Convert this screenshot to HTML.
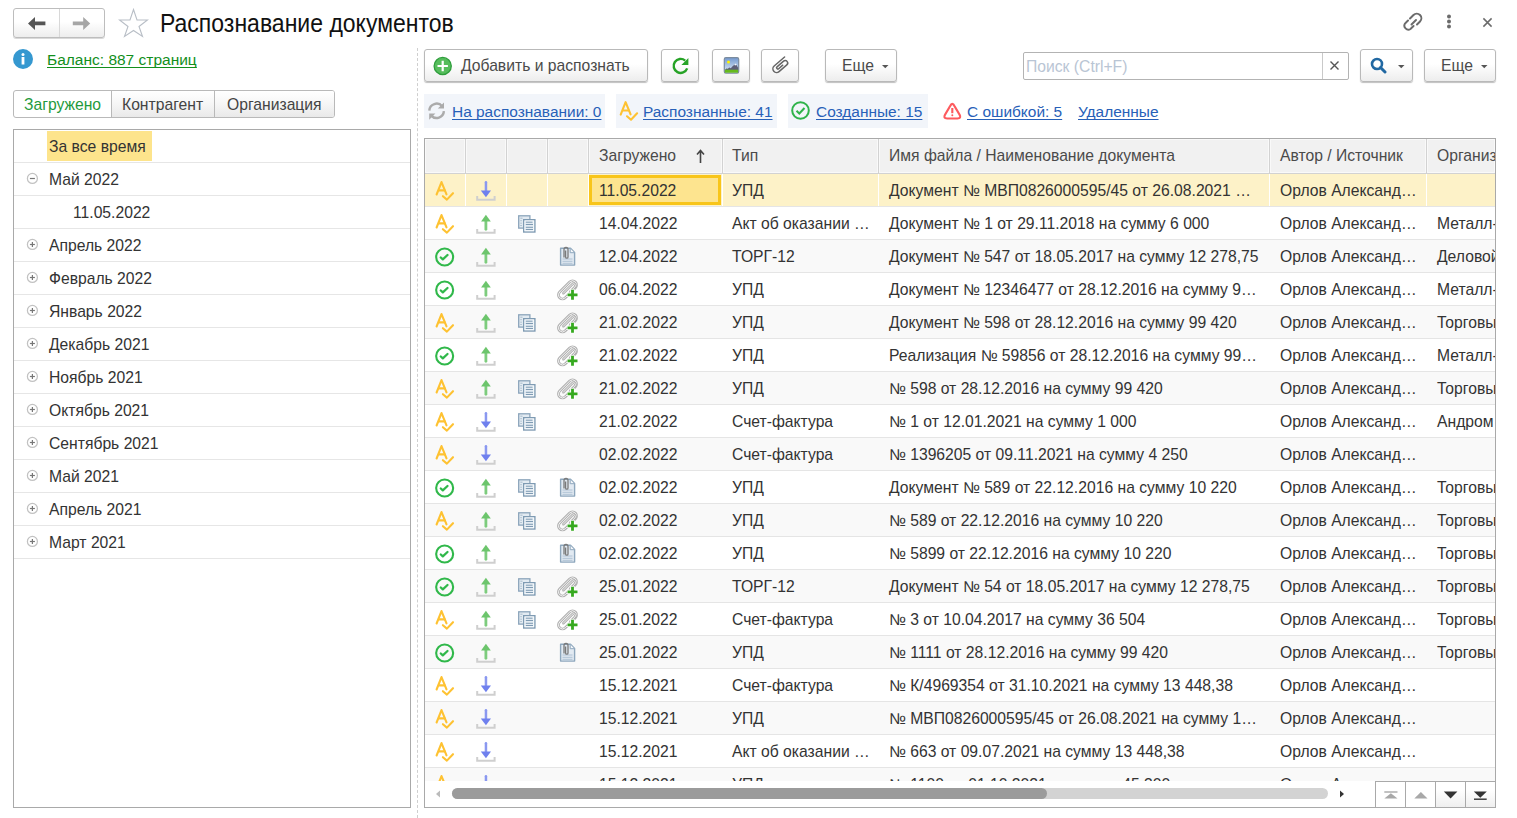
<!DOCTYPE html><html><head><meta charset="utf-8"><style>
*{box-sizing:border-box;margin:0;padding:0}
html,body{width:1517px;height:818px;overflow:hidden;background:#fff;font-family:"Liberation Sans",sans-serif;font-size:15.7px;color:#333}
.a{position:absolute}
.btn{position:absolute;border:1px solid #b9b9b9;border-radius:3px;background:linear-gradient(#fff 0%,#fff 45%,#ededed 100%);box-shadow:0 1px 1px rgba(0,0,0,.25)}
.lnk{text-decoration:underline;text-decoration-skip-ink:none;text-underline-offset:2px;white-space:nowrap}
.tx{position:absolute;white-space:nowrap;line-height:18px;margin-top:1px}
.chip{position:absolute;background:#f2f5fa;height:34px;top:94px}
.tree-row{position:absolute;left:1px;right:1px;height:33px;border-bottom:1px solid #e6e6e6}
.grid{position:absolute;left:424px;top:138px;width:1072px;height:670px;border:1px solid #a9a9a9;overflow:hidden;background:#fff}
.hdr{position:absolute;left:0;top:0;height:35px;width:1070px;background:#f2f2f2;border-bottom:1px solid #d5d5d5}
.hsep{position:absolute;top:0;height:34px;width:2px;border-left:1px solid #dcdcdc;border-right:1px solid #fff}
.row{position:absolute;left:0;width:1070px;height:33px;border-bottom:1px solid #e4e4e4}
.cell{position:absolute;top:0;height:32px;line-height:32px;white-space:nowrap;overflow:hidden;color:#333}
</style></head><body><div class="btn" style="left:13px;top:8px;width:92px;height:30px;box-shadow:0 1px 0 rgba(0,0,0,.15);border-color:#bdbdbd"></div><div class="a" style="left:59px;top:9px;width:1px;height:28px;background:#d8d8d8"></div><svg class="a" style="left:20px;top:10px" width="80" height="26" viewBox="20 10 80 26"><path d="M28 23.45 L35 16.9 V21.6 H45.4 V25.3 H35 V30 Z" fill="#555"/><path d="M90.2 23.45 L83.2 16.9 V21.6 H72.8 V25.3 H83.2 V30 Z" fill="#a6a6a6"/></svg><svg class="a" style="left:118px;top:8px" width="31" height="30" viewBox="0 0 31 30"><path d="M15.5 1.5 L19 12 L29.5 12 L21 18.5 L24.5 28.5 L15.5 22.5 L6.5 28.5 L10 18.5 L1.5 12 L12 12 Z" fill="none" stroke="#b8bec6" stroke-width="1.1" stroke-linejoin="miter"/></svg><div class="tx" style="left:160px;top:6px;font-size:23px;line-height:28px;color:#111;transform:scaleY(1.14);transform-origin:0 0">Распознавание документов</div><svg class="a" style="left:1403px;top:11px" width="24" height="22" viewBox="0 0 24 22"><g fill="none" stroke="#6b6b6b" stroke-width="2" stroke-linecap="round"><path d="M7 7.5 L10.5 4 A4 4 0 0 1 17 10.5 L14 13.5"/><path d="M10.5 15 L7.5 18 A4 4 0 0 1 2 12.5 L5 9.5"/><path d="M8.5 13.5 L13 9"/></g></svg><svg class="a" style="left:1445px;top:13px" width="8" height="18" viewBox="0 0 8 18"><g fill="#6b6b6b"><circle cx="4" cy="3.5" r="2"/><circle cx="4" cy="8.5" r="2"/><circle cx="4" cy="13.5" r="2"/></g></svg><svg class="a" style="left:1481px;top:16px" width="13" height="13" viewBox="0 0 13 13"><g stroke="#6b6b6b" stroke-width="1.5"><path d="M2.4 2.4 L10.6 10.6 M10.6 2.4 L2.4 10.6"/></g></svg><svg class="a" style="left:13px;top:49px" width="20" height="20" viewBox="0 0 20 20"><circle cx="10" cy="10" r="10" fill="#3598d0"/><rect x="8.6" y="8" width="2.8" height="7.5" fill="#fff"/><circle cx="10" cy="5.4" r="1.5" fill="#fff"/></svg><div class="tx lnk" style="left:47px;top:50px;color:#128f1c;font-size:15.5px">Баланс: 887 страниц</div><div class="a" style="left:13px;top:90px;width:322px;height:28px;border:1px solid #b9b9b9;border-radius:3px;background:#fff;overflow:hidden"><div class="a" style="left:98px;top:0;width:222px;height:26px;background:linear-gradient(#fff 0%,#f6f6f6 50%,#e9e9e9 100%)"></div><div class="a" style="left:97px;top:0;width:1px;height:26px;background:#b9b9b9"></div><div class="a" style="left:200px;top:0;width:1px;height:26px;background:#b9b9b9"></div><div class="tx" style="left:10px;top:4px;color:#1f9a3c">Загружено</div><div class="tx" style="left:108px;top:4px;color:#444">Контрагент</div><div class="tx" style="left:213px;top:4px;color:#444">Организация</div></div><div class="a" style="left:13px;top:129px;width:398px;height:679px;border:1px solid #a9a9a9;background:#fff"><div class="tree-row" style="top:0px;left:0;right:0"><div class="a" style="left:33px;top:1px;width:105px;height:30px;background:#fde48c"></div><div class="tx" style="left:35px;top:7px;color:#333">За все время</div></div><div class="tree-row" style="top:33px;left:0;right:0"><svg class="a" style="left:12px;top:9px" width="14" height="14" viewBox="0 0 14 14"><circle cx="6.4" cy="6.4" r="5" fill="none" stroke="#c2c2c2" stroke-width="1.25"/><g fill="none" stroke="#777" stroke-width="1.2"><path d="M3.9 6.5 H8.9"/></g></svg><div class="tx" style="left:35px;top:7px;color:#333">Май 2022</div></div><div class="tree-row" style="top:66px;left:0;right:0"><div class="tx" style="left:59px;top:7px;color:#333">11.05.2022</div></div><div class="tree-row" style="top:99px;left:0;right:0"><svg class="a" style="left:12px;top:9px" width="14" height="14" viewBox="0 0 14 14"><circle cx="6.4" cy="6.4" r="5" fill="none" stroke="#c2c2c2" stroke-width="1.25"/><g fill="none" stroke="#777" stroke-width="1.2"><path d="M3.9 6.5 H8.9"/><path d="M6.4 4 V9"/></g></svg><div class="tx" style="left:35px;top:7px;color:#333">Апрель 2022</div></div><div class="tree-row" style="top:132px;left:0;right:0"><svg class="a" style="left:12px;top:9px" width="14" height="14" viewBox="0 0 14 14"><circle cx="6.4" cy="6.4" r="5" fill="none" stroke="#c2c2c2" stroke-width="1.25"/><g fill="none" stroke="#777" stroke-width="1.2"><path d="M3.9 6.5 H8.9"/><path d="M6.4 4 V9"/></g></svg><div class="tx" style="left:35px;top:7px;color:#333">Февраль 2022</div></div><div class="tree-row" style="top:165px;left:0;right:0"><svg class="a" style="left:12px;top:9px" width="14" height="14" viewBox="0 0 14 14"><circle cx="6.4" cy="6.4" r="5" fill="none" stroke="#c2c2c2" stroke-width="1.25"/><g fill="none" stroke="#777" stroke-width="1.2"><path d="M3.9 6.5 H8.9"/><path d="M6.4 4 V9"/></g></svg><div class="tx" style="left:35px;top:7px;color:#333">Январь 2022</div></div><div class="tree-row" style="top:198px;left:0;right:0"><svg class="a" style="left:12px;top:9px" width="14" height="14" viewBox="0 0 14 14"><circle cx="6.4" cy="6.4" r="5" fill="none" stroke="#c2c2c2" stroke-width="1.25"/><g fill="none" stroke="#777" stroke-width="1.2"><path d="M3.9 6.5 H8.9"/><path d="M6.4 4 V9"/></g></svg><div class="tx" style="left:35px;top:7px;color:#333">Декабрь 2021</div></div><div class="tree-row" style="top:231px;left:0;right:0"><svg class="a" style="left:12px;top:9px" width="14" height="14" viewBox="0 0 14 14"><circle cx="6.4" cy="6.4" r="5" fill="none" stroke="#c2c2c2" stroke-width="1.25"/><g fill="none" stroke="#777" stroke-width="1.2"><path d="M3.9 6.5 H8.9"/><path d="M6.4 4 V9"/></g></svg><div class="tx" style="left:35px;top:7px;color:#333">Ноябрь 2021</div></div><div class="tree-row" style="top:264px;left:0;right:0"><svg class="a" style="left:12px;top:9px" width="14" height="14" viewBox="0 0 14 14"><circle cx="6.4" cy="6.4" r="5" fill="none" stroke="#c2c2c2" stroke-width="1.25"/><g fill="none" stroke="#777" stroke-width="1.2"><path d="M3.9 6.5 H8.9"/><path d="M6.4 4 V9"/></g></svg><div class="tx" style="left:35px;top:7px;color:#333">Октябрь 2021</div></div><div class="tree-row" style="top:297px;left:0;right:0"><svg class="a" style="left:12px;top:9px" width="14" height="14" viewBox="0 0 14 14"><circle cx="6.4" cy="6.4" r="5" fill="none" stroke="#c2c2c2" stroke-width="1.25"/><g fill="none" stroke="#777" stroke-width="1.2"><path d="M3.9 6.5 H8.9"/><path d="M6.4 4 V9"/></g></svg><div class="tx" style="left:35px;top:7px;color:#333">Сентябрь 2021</div></div><div class="tree-row" style="top:330px;left:0;right:0"><svg class="a" style="left:12px;top:9px" width="14" height="14" viewBox="0 0 14 14"><circle cx="6.4" cy="6.4" r="5" fill="none" stroke="#c2c2c2" stroke-width="1.25"/><g fill="none" stroke="#777" stroke-width="1.2"><path d="M3.9 6.5 H8.9"/><path d="M6.4 4 V9"/></g></svg><div class="tx" style="left:35px;top:7px;color:#333">Май 2021</div></div><div class="tree-row" style="top:363px;left:0;right:0"><svg class="a" style="left:12px;top:9px" width="14" height="14" viewBox="0 0 14 14"><circle cx="6.4" cy="6.4" r="5" fill="none" stroke="#c2c2c2" stroke-width="1.25"/><g fill="none" stroke="#777" stroke-width="1.2"><path d="M3.9 6.5 H8.9"/><path d="M6.4 4 V9"/></g></svg><div class="tx" style="left:35px;top:7px;color:#333">Апрель 2021</div></div><div class="tree-row" style="top:396px;left:0;right:0"><svg class="a" style="left:12px;top:9px" width="14" height="14" viewBox="0 0 14 14"><circle cx="6.4" cy="6.4" r="5" fill="none" stroke="#c2c2c2" stroke-width="1.25"/><g fill="none" stroke="#777" stroke-width="1.2"><path d="M3.9 6.5 H8.9"/><path d="M6.4 4 V9"/></g></svg><div class="tx" style="left:35px;top:7px;color:#333">Март 2021</div></div></div><div class="a" style="left:417px;top:48px;width:1px;height:770px;border-left:1px dashed #cfcfcf"></div><div class="btn" style="left:424px;top:49px;width:224px;height:33px"></div><svg class="a" style="left:432px;top:56px" width="21" height="21" viewBox="432 56 21 21"><circle cx="442.7" cy="66" r="8.6" fill="#56bd5c" stroke="#2f9e3c" stroke-width="1.3"/><path d="M442.7 60.8 V71.2 M437.5 66 H447.9" stroke="#fff" stroke-width="2.2"/></svg><div class="tx" style="left:461px;top:56px;color:#4a4a4a">Добавить и распознать</div><div class="btn" style="left:661px;top:49px;width:38px;height:33px"></div><svg class="a" style="left:668px;top:53px" width="26" height="25" viewBox="668 53 26 25"><path d="M687.2 68.4 A7 7 0 1 1 685.2 60.6" fill="none" stroke="#27a327" stroke-width="2.4"/><path d="M688.4 58 L688.4 65 L681.4 65 Z" fill="#27a327"/></svg><div class="btn" style="left:712px;top:49px;width:38px;height:33px"></div><svg class="a" style="left:720px;top:54px" width="24" height="24" viewBox="720 54 24 24"><defs><linearGradient id="sky" x1="0" y1="0" x2="0" y2="1"><stop offset="0" stop-color="#7399cf"/><stop offset="1" stop-color="#e6f1fb"/></linearGradient></defs><rect x="724.3" y="57.7" width="14.4" height="15.4" rx="1.6" fill="url(#sky)" stroke="#7b8c9e" stroke-width="1.2"/><circle cx="728.5" cy="62" r="1.5" fill="#fff200"/><path d="M724.9 69.9 L726.3 68.4 L727.8 68.8 L729.3 67.6 L730.8 68.3 L732.6 66.3 L733.8 65.2 L735.5 64.3 L736.8 65.6 L738.1 67.8 V69.9 Z" fill="#5e5f77"/><path d="M734.3 64.9 L735.6 63.6 L736.6 64.6 L735.5 65.6 Z" fill="#f4f7fb"/><rect x="724.9" y="69.7" width="13.2" height="3" fill="#66ba1e"/></svg><div class="btn" style="left:761px;top:49px;width:38px;height:33px"></div><svg class="a" style="left:764px;top:51px" width="32" height="28" viewBox="764 51 32 28"><path transform="translate(776.6 68.8) rotate(-41)" d="M13.8 -3.7 L0 -3.7 A3.7 3.7 0 0 0 0 3.7 L10.3 3.7 A2.45 2.45 0 0 0 10.3 -1.2 L1.6 -1.2 A1.25 1.25 0 0 0 1.6 1.3 L7 1.3" fill="none" stroke="#666" stroke-width="1.5" stroke-linecap="round"/></svg><div class="btn" style="left:825px;top:49px;width:72px;height:33px"></div><div class="tx" style="left:842px;top:56px;color:#4a4a4a">Еще</div><svg class="a" style="left:882px;top:65px" width="7" height="4" viewBox="0 0 7 4"><path d="M0 0 H6.5 L3.25 3.3 Z" fill="#555"/></svg><div class="a" style="left:1023px;top:52px;width:326px;height:28px;border:1px solid #b3b3b3;border-radius:2px;background:#fff"></div><div class="a" style="left:1322px;top:53px;width:1px;height:26px;background:#c9c9c9"></div><div class="tx" style="left:1026px;top:57px;color:#b9c5d4">Поиск (Ctrl+F)</div><svg class="a" style="left:1329px;top:60px" width="11" height="11" viewBox="0 0 11 11"><path d="M1.5 1.5 L9.5 9.5 M9.5 1.5 L1.5 9.5" stroke="#555" stroke-width="1.4"/></svg><div class="btn" style="left:1360px;top:49px;width:53px;height:33px"></div><svg class="a" style="left:1370px;top:57px" width="17" height="17" viewBox="0 0 17 17"><circle cx="7" cy="7" r="5" fill="none" stroke="#2168a2" stroke-width="2.6"/><path d="M10.5 10.5 L15 15" stroke="#2168a2" stroke-width="3" stroke-linecap="round"/></svg><svg class="a" style="left:1398px;top:65px" width="7" height="4" viewBox="0 0 7 4"><path d="M0 0 H6.5 L3.25 3.3 Z" fill="#555"/></svg><div class="btn" style="left:1424px;top:49px;width:72px;height:33px"></div><div class="tx" style="left:1441px;top:56px;color:#4a4a4a">Еще</div><svg class="a" style="left:1481px;top:65px" width="7" height="4" viewBox="0 0 7 4"><path d="M0 0 H6.5 L3.25 3.3 Z" fill="#555"/></svg><div class="chip" style="left:424px;width:181px"></div><svg class="a" style="left:424px;top:98px" width="26" height="26" viewBox="424 98 26 26"><g fill="none" stroke="#ababab" stroke-width="2.4"><path d="M429.3 110.6 A7.3 7.3 0 0 1 442.2 106.3"/><path d="M443.9 111.2 A7.3 7.3 0 0 1 431.2 115.6"/></g><path d="M444 102.4 L444 108.6 L437.8 108.6 Z M429.2 113.5 L429.2 119.8 L435.4 113.5 Z" fill="#ababab"/></svg><div class="tx lnk" style="left:452px;top:102px;color:#2760b8;font-size:15.45px">На распознавании: 0</div><div class="chip" style="left:616px;width:161px"></div><svg class="a" style="left:615px;top:98px" width="26" height="26" viewBox="615 98 26 26"><g transform="translate(609.1 94.1)" fill="none" stroke="#fec232" stroke-width="2.1" stroke-linecap="round" stroke-linejoin="round"><path d="M11.6 20.5 L16.5 8.1 L21.5 20.3"/><path d="M14 16.4 H19.6"/><path d="M17.9 22.2 L21.9 25.6 L28 19.2"/></g></svg><div class="tx lnk" style="left:643px;top:102px;color:#2760b8;font-size:15.45px">Распознанные: 41</div><div class="chip" style="left:788px;width:140px"></div><svg class="a" style="left:791px;top:101px" width="19" height="19" viewBox="0 0 19 19"><circle cx="9.5" cy="9.5" r="8.3" fill="none" stroke="#2fb34a" stroke-width="2"/><path d="M5.5 9.8 L8.3 12.5 L13.5 7" fill="none" stroke="#2fb34a" stroke-width="2"/></svg><div class="tx lnk" style="left:816px;top:102px;color:#2760b8;font-size:15.45px">Созданные: 15</div><svg class="a" style="left:938px;top:98px" width="30" height="26" viewBox="938 98 30 26"><path d="M950 106.3 Q952.3 101.6 954.6 106.3 L959.6 114.8 Q961.6 118.5 957.5 118.5 L947.1 118.5 Q943 118.5 945 114.8 Z" fill="none" stroke="#fd5a5e" stroke-width="2.2" stroke-linejoin="round"/><path d="M952.3 108 V113.2" stroke="#fd5a5e" stroke-width="2.1"/><circle cx="952.3" cy="115.3" r="1" fill="#fd5a5e"/></svg><div class="tx lnk" style="left:967px;top:102px;color:#2760b8;font-size:15.45px">С ошибкой: 5</div><div class="tx lnk" style="left:1078px;top:102px;color:#2760b8;font-size:15.45px">Удаленные</div><div class="a" style="left:424px;top:138px;width:1072px;height:670px;border:1px solid #a9a9a9;background:#fff;overflow:hidden"><div class="a" style="left:0;top:0;width:1070px;height:35px;background:#d2d2d2"></div><div class="a" style="left:0px;top:0;width:40px;height:34px;background:#f1f1f1;border:1px solid #f9f9f9"></div><div class="a" style="left:41px;top:0;width:40px;height:34px;background:#f1f1f1;border:1px solid #f9f9f9"></div><div class="a" style="left:82px;top:0;width:40px;height:34px;background:#f1f1f1;border:1px solid #f9f9f9"></div><div class="a" style="left:123px;top:0;width:40px;height:34px;background:#f1f1f1;border:1px solid #f9f9f9"></div><div class="a" style="left:164px;top:0;width:133px;height:34px;background:#f1f1f1;border:1px solid #f9f9f9"></div><div class="a" style="left:298px;top:0;width:155px;height:34px;background:#f1f1f1;border:1px solid #f9f9f9"></div><div class="a" style="left:454px;top:0;width:390px;height:34px;background:#f1f1f1;border:1px solid #f9f9f9"></div><div class="a" style="left:845px;top:0;width:156px;height:34px;background:#f1f1f1;border:1px solid #f9f9f9"></div><div class="a" style="left:1002px;top:0;width:68px;height:34px;background:#f1f1f1;border:1px solid #f9f9f9"></div><div class="tx" style="left:174px;top:7px;color:#4a4a4a">Загружено</div><div class="tx" style="left:307px;top:7px;color:#4a4a4a">Тип</div><div class="tx" style="left:464px;top:7px;color:#4a4a4a">Имя файла / Наименование документа</div><div class="tx" style="left:855px;top:7px;color:#4a4a4a">Автор / Источник</div><div class="tx" style="left:1012px;top:7px;color:#4a4a4a">Организация</div><svg class="a" style="left:271px;top:10px" width="9" height="15" viewBox="0 0 9 15"><path d="M4.5 14 V2 M1 5.5 L4.5 1.5 L8 5.5" fill="none" stroke="#444" stroke-width="1.6"/></svg><div class="a" style="left:0;top:35px;width:1070px;height:607px;overflow:hidden"><div class="a" style="left:0;top:0px;width:1070px;height:33px;background:#fdf2c8;border-bottom:1px solid #e5e5e5"><div class="a" style="left:40px;top:0;width:1px;height:32px;background:#fff"></div><div class="a" style="left:81px;top:0;width:1px;height:32px;background:#fff"></div><div class="a" style="left:122px;top:0;width:1px;height:32px;background:#fff"></div><div class="a" style="left:163px;top:0;width:1px;height:32px;background:#fff"></div><div class="a" style="left:297px;top:0;width:1px;height:32px;background:#fff"></div><div class="a" style="left:453px;top:0;width:1px;height:32px;background:#fff"></div><div class="a" style="left:844px;top:0;width:1px;height:32px;background:#fff"></div><div class="a" style="left:1001px;top:0;width:1px;height:32px;background:#fff"></div><div class="a" style="left:164px;top:1px;width:132px;height:30px;background:#fde48f;border:3px solid #f8c51a"></div><svg class="a" style="left:8px;top:5px" width="24" height="24" viewBox="8 5 24 24"><g fill="none" stroke="#fec232" stroke-width="2.1" stroke-linecap="round" stroke-linejoin="round"><path d="M11.6 20.5 L16.5 8.1 L21.5 20.3"/><path d="M14 16.4 H19.6"/><path d="M17.9 22.2 L21.9 25.6 L28 19.2"/></g></svg><svg class="a" style="left:48px;top:4px" width="26" height="26" viewBox="48 4 26 26"><path d="M52.2 21.9 V25.8 H69.6 V21.9" fill="none" stroke="#cfcfcf" stroke-width="2"/><path d="M60.95 8.2 V17" stroke="#8a98f0" stroke-width="2.5" stroke-linecap="round"/><path d="M55.8 16.6 L66 16.6 L60.95 23.2 Z" fill="#6f80ee"/></svg><div class="tx" style="left:174px;top:7px;color:#333">11.05.2022</div><div class="tx" style="left:307px;top:7px;color:#333">УПД</div><div class="tx" style="left:464px;top:7px;color:#333">Документ № МВП0826000595/45 от 26.08.2021 …</div><div class="tx" style="left:855px;top:7px;color:#333">Орлов Александ…</div></div><div class="a" style="left:0;top:33px;width:1070px;height:33px;background:#fff;border-bottom:1px solid #e5e5e5"><svg class="a" style="left:8px;top:5px" width="24" height="24" viewBox="8 5 24 24"><g fill="none" stroke="#fec232" stroke-width="2.1" stroke-linecap="round" stroke-linejoin="round"><path d="M11.6 20.5 L16.5 8.1 L21.5 20.3"/><path d="M14 16.4 H19.6"/><path d="M17.9 22.2 L21.9 25.6 L28 19.2"/></g></svg><svg class="a" style="left:48px;top:4px" width="26" height="26" viewBox="48 4 26 26"><path d="M52.2 21.9 V25.8 H69.6 V21.9" fill="none" stroke="#cfcfcf" stroke-width="2"/><path d="M60.9 14 V22.3" stroke="#7dcc7d" stroke-width="2.8" stroke-linecap="round"/><path d="M56.1 14.4 L60.9 7.8 L65.8 14.4 Z" fill="#6cc56c"/></svg><svg class="a" style="left:90px;top:6px" width="24" height="22" viewBox="90 6 24 22"><rect x="93.7" y="8.8" width="11.2" height="12.3" fill="#e3ebf2" stroke="#8aa4bb" stroke-width="1.3"/><path d="M95.3 11.2 H97.5 M95.3 13.7 H96.8 M95.3 16.2 H96.8 M95.3 18.5 H96.8" stroke="#9fb4c6" stroke-width="0.9"/><rect x="98.7" y="12.7" width="11.2" height="12.3" fill="#e3ebf2" stroke="#7f9bb3" stroke-width="1.4"/><rect x="99.9" y="13.9" width="8.8" height="9.9" fill="none" stroke="#fafcfd" stroke-width="0.8"/><path d="M100.8 15.2 H107.5 M100.8 17.5 H108 M100.8 20.3 H108 M100.8 22.5 H108" stroke="#7f9bb3" stroke-width="1"/></svg><div class="tx" style="left:174px;top:7px;color:#333">14.04.2022</div><div class="tx" style="left:307px;top:7px;color:#333">Акт об оказании …</div><div class="tx" style="left:464px;top:7px;color:#333">Документ № 1 от 29.11.2018 на сумму 6 000</div><div class="tx" style="left:855px;top:7px;color:#333">Орлов Александ…</div><div class="tx" style="left:1012px;top:7px;color:#333">Металл-</div></div><div class="a" style="left:0;top:66px;width:1070px;height:33px;background:#f9f9f9;border-bottom:1px solid #e5e5e5"><svg class="a" style="left:8px;top:5px" width="24" height="24" viewBox="8 5 24 24"><circle cx="19.65" cy="16.95" r="8.5" fill="none" stroke="#30b84a" stroke-width="2.1"/><path d="M15.8 17.5 L17.8 19.3 L22.5 15" fill="none" stroke="#30b84a" stroke-width="2.3" stroke-linecap="round" stroke-linejoin="round"/></svg><svg class="a" style="left:48px;top:4px" width="26" height="26" viewBox="48 4 26 26"><path d="M52.2 21.9 V25.8 H69.6 V21.9" fill="none" stroke="#cfcfcf" stroke-width="2"/><path d="M60.9 14 V22.3" stroke="#7dcc7d" stroke-width="2.8" stroke-linecap="round"/><path d="M56.1 14.4 L60.9 7.8 L65.8 14.4 Z" fill="#6cc56c"/></svg><svg class="a" style="left:132px;top:5px" width="22" height="24" viewBox="132 5 22 24"><path d="M135.6 8.3 H145.5 L149.6 12.4 V25.1 H135.6 Z" fill="#e2eaf2" stroke="#8ea7bd" stroke-width="1.4" stroke-linejoin="round"/><path d="M145.2 8.5 V12.7 H149.4" fill="#f4f7fa" stroke="#8ea7bd" stroke-width="1"/><path d="M137.5 19 H147.5 M137.5 21.3 H147.5 M137.5 23.3 H147.5" stroke="#a9bdd0" stroke-width="0.9"/><path d="M139 17.5 V9.5 A2 2 0 0 1 143 9.5 V17 A1.2 1.2 0 0 1 140.6 17 V10.5" fill="none" stroke="#7a7a7a" stroke-width="1.3"/></svg><div class="tx" style="left:174px;top:7px;color:#333">12.04.2022</div><div class="tx" style="left:307px;top:7px;color:#333">ТОРГ-12</div><div class="tx" style="left:464px;top:7px;color:#333">Документ № 547 от 18.05.2017 на сумму 12 278,75</div><div class="tx" style="left:855px;top:7px;color:#333">Орлов Александ…</div><div class="tx" style="left:1012px;top:7px;color:#333">Деловой</div></div><div class="a" style="left:0;top:99px;width:1070px;height:33px;background:#fff;border-bottom:1px solid #e5e5e5"><svg class="a" style="left:8px;top:5px" width="24" height="24" viewBox="8 5 24 24"><circle cx="19.65" cy="16.95" r="8.5" fill="none" stroke="#30b84a" stroke-width="2.1"/><path d="M15.8 17.5 L17.8 19.3 L22.5 15" fill="none" stroke="#30b84a" stroke-width="2.3" stroke-linecap="round" stroke-linejoin="round"/></svg><svg class="a" style="left:48px;top:4px" width="26" height="26" viewBox="48 4 26 26"><path d="M52.2 21.9 V25.8 H69.6 V21.9" fill="none" stroke="#cfcfcf" stroke-width="2"/><path d="M60.9 14 V22.3" stroke="#7dcc7d" stroke-width="2.8" stroke-linecap="round"/><path d="M56.1 14.4 L60.9 7.8 L65.8 14.4 Z" fill="#6cc56c"/></svg><svg class="a" style="left:130px;top:4px" width="26" height="26" viewBox="130 4 26 26"><g transform="translate(142.3 17.1) rotate(-45)" fill="none" stroke-linecap="round"><rect x="-10.8" y="-4" width="22.2" height="8" rx="4" stroke="#b0b0b0" stroke-width="2.8"/><rect x="-10.8" y="-4" width="22.2" height="8" rx="4" stroke="#f7f7f7" stroke-width="0.9"/><path d="M-5 -0.6 L7.6 -0.6 A1.9 1.9 0 0 1 7.6 3.2 L1 3.2" stroke="#b0b0b0" stroke-width="2.6"/><path d="M-5 -0.6 L7.6 -0.6 A1.9 1.9 0 0 1 7.6 3.2 L1 3.2" stroke="#f7f7f7" stroke-width="0.8"/></g><path d="M147.5 16.3 V27.3 M142 21.8 H153" stroke="#fff" stroke-width="4.6"/><path d="M147.5 16.8 V26.8 M142.5 21.8 H152.5" stroke="#36a91f" stroke-width="2.8"/></svg><div class="tx" style="left:174px;top:7px;color:#333">06.04.2022</div><div class="tx" style="left:307px;top:7px;color:#333">УПД</div><div class="tx" style="left:464px;top:7px;color:#333">Документ № 12346477 от 28.12.2016 на сумму 9…</div><div class="tx" style="left:855px;top:7px;color:#333">Орлов Александ…</div><div class="tx" style="left:1012px;top:7px;color:#333">Металл-</div></div><div class="a" style="left:0;top:132px;width:1070px;height:33px;background:#f9f9f9;border-bottom:1px solid #e5e5e5"><svg class="a" style="left:8px;top:5px" width="24" height="24" viewBox="8 5 24 24"><g fill="none" stroke="#fec232" stroke-width="2.1" stroke-linecap="round" stroke-linejoin="round"><path d="M11.6 20.5 L16.5 8.1 L21.5 20.3"/><path d="M14 16.4 H19.6"/><path d="M17.9 22.2 L21.9 25.6 L28 19.2"/></g></svg><svg class="a" style="left:48px;top:4px" width="26" height="26" viewBox="48 4 26 26"><path d="M52.2 21.9 V25.8 H69.6 V21.9" fill="none" stroke="#cfcfcf" stroke-width="2"/><path d="M60.9 14 V22.3" stroke="#7dcc7d" stroke-width="2.8" stroke-linecap="round"/><path d="M56.1 14.4 L60.9 7.8 L65.8 14.4 Z" fill="#6cc56c"/></svg><svg class="a" style="left:90px;top:6px" width="24" height="22" viewBox="90 6 24 22"><rect x="93.7" y="8.8" width="11.2" height="12.3" fill="#e3ebf2" stroke="#8aa4bb" stroke-width="1.3"/><path d="M95.3 11.2 H97.5 M95.3 13.7 H96.8 M95.3 16.2 H96.8 M95.3 18.5 H96.8" stroke="#9fb4c6" stroke-width="0.9"/><rect x="98.7" y="12.7" width="11.2" height="12.3" fill="#e3ebf2" stroke="#7f9bb3" stroke-width="1.4"/><rect x="99.9" y="13.9" width="8.8" height="9.9" fill="none" stroke="#fafcfd" stroke-width="0.8"/><path d="M100.8 15.2 H107.5 M100.8 17.5 H108 M100.8 20.3 H108 M100.8 22.5 H108" stroke="#7f9bb3" stroke-width="1"/></svg><svg class="a" style="left:130px;top:4px" width="26" height="26" viewBox="130 4 26 26"><g transform="translate(142.3 17.1) rotate(-45)" fill="none" stroke-linecap="round"><rect x="-10.8" y="-4" width="22.2" height="8" rx="4" stroke="#b0b0b0" stroke-width="2.8"/><rect x="-10.8" y="-4" width="22.2" height="8" rx="4" stroke="#f7f7f7" stroke-width="0.9"/><path d="M-5 -0.6 L7.6 -0.6 A1.9 1.9 0 0 1 7.6 3.2 L1 3.2" stroke="#b0b0b0" stroke-width="2.6"/><path d="M-5 -0.6 L7.6 -0.6 A1.9 1.9 0 0 1 7.6 3.2 L1 3.2" stroke="#f7f7f7" stroke-width="0.8"/></g><path d="M147.5 16.3 V27.3 M142 21.8 H153" stroke="#fff" stroke-width="4.6"/><path d="M147.5 16.8 V26.8 M142.5 21.8 H152.5" stroke="#36a91f" stroke-width="2.8"/></svg><div class="tx" style="left:174px;top:7px;color:#333">21.02.2022</div><div class="tx" style="left:307px;top:7px;color:#333">УПД</div><div class="tx" style="left:464px;top:7px;color:#333">Документ № 598 от 28.12.2016 на сумму 99 420</div><div class="tx" style="left:855px;top:7px;color:#333">Орлов Александ…</div><div class="tx" style="left:1012px;top:7px;color:#333">Торговы</div></div><div class="a" style="left:0;top:165px;width:1070px;height:33px;background:#fff;border-bottom:1px solid #e5e5e5"><svg class="a" style="left:8px;top:5px" width="24" height="24" viewBox="8 5 24 24"><circle cx="19.65" cy="16.95" r="8.5" fill="none" stroke="#30b84a" stroke-width="2.1"/><path d="M15.8 17.5 L17.8 19.3 L22.5 15" fill="none" stroke="#30b84a" stroke-width="2.3" stroke-linecap="round" stroke-linejoin="round"/></svg><svg class="a" style="left:48px;top:4px" width="26" height="26" viewBox="48 4 26 26"><path d="M52.2 21.9 V25.8 H69.6 V21.9" fill="none" stroke="#cfcfcf" stroke-width="2"/><path d="M60.9 14 V22.3" stroke="#7dcc7d" stroke-width="2.8" stroke-linecap="round"/><path d="M56.1 14.4 L60.9 7.8 L65.8 14.4 Z" fill="#6cc56c"/></svg><svg class="a" style="left:130px;top:4px" width="26" height="26" viewBox="130 4 26 26"><g transform="translate(142.3 17.1) rotate(-45)" fill="none" stroke-linecap="round"><rect x="-10.8" y="-4" width="22.2" height="8" rx="4" stroke="#b0b0b0" stroke-width="2.8"/><rect x="-10.8" y="-4" width="22.2" height="8" rx="4" stroke="#f7f7f7" stroke-width="0.9"/><path d="M-5 -0.6 L7.6 -0.6 A1.9 1.9 0 0 1 7.6 3.2 L1 3.2" stroke="#b0b0b0" stroke-width="2.6"/><path d="M-5 -0.6 L7.6 -0.6 A1.9 1.9 0 0 1 7.6 3.2 L1 3.2" stroke="#f7f7f7" stroke-width="0.8"/></g><path d="M147.5 16.3 V27.3 M142 21.8 H153" stroke="#fff" stroke-width="4.6"/><path d="M147.5 16.8 V26.8 M142.5 21.8 H152.5" stroke="#36a91f" stroke-width="2.8"/></svg><div class="tx" style="left:174px;top:7px;color:#333">21.02.2022</div><div class="tx" style="left:307px;top:7px;color:#333">УПД</div><div class="tx" style="left:464px;top:7px;color:#333">Реализация № 59856 от 28.12.2016 на сумму 99…</div><div class="tx" style="left:855px;top:7px;color:#333">Орлов Александ…</div><div class="tx" style="left:1012px;top:7px;color:#333">Металл-</div></div><div class="a" style="left:0;top:198px;width:1070px;height:33px;background:#f9f9f9;border-bottom:1px solid #e5e5e5"><svg class="a" style="left:8px;top:5px" width="24" height="24" viewBox="8 5 24 24"><g fill="none" stroke="#fec232" stroke-width="2.1" stroke-linecap="round" stroke-linejoin="round"><path d="M11.6 20.5 L16.5 8.1 L21.5 20.3"/><path d="M14 16.4 H19.6"/><path d="M17.9 22.2 L21.9 25.6 L28 19.2"/></g></svg><svg class="a" style="left:48px;top:4px" width="26" height="26" viewBox="48 4 26 26"><path d="M52.2 21.9 V25.8 H69.6 V21.9" fill="none" stroke="#cfcfcf" stroke-width="2"/><path d="M60.9 14 V22.3" stroke="#7dcc7d" stroke-width="2.8" stroke-linecap="round"/><path d="M56.1 14.4 L60.9 7.8 L65.8 14.4 Z" fill="#6cc56c"/></svg><svg class="a" style="left:90px;top:6px" width="24" height="22" viewBox="90 6 24 22"><rect x="93.7" y="8.8" width="11.2" height="12.3" fill="#e3ebf2" stroke="#8aa4bb" stroke-width="1.3"/><path d="M95.3 11.2 H97.5 M95.3 13.7 H96.8 M95.3 16.2 H96.8 M95.3 18.5 H96.8" stroke="#9fb4c6" stroke-width="0.9"/><rect x="98.7" y="12.7" width="11.2" height="12.3" fill="#e3ebf2" stroke="#7f9bb3" stroke-width="1.4"/><rect x="99.9" y="13.9" width="8.8" height="9.9" fill="none" stroke="#fafcfd" stroke-width="0.8"/><path d="M100.8 15.2 H107.5 M100.8 17.5 H108 M100.8 20.3 H108 M100.8 22.5 H108" stroke="#7f9bb3" stroke-width="1"/></svg><svg class="a" style="left:130px;top:4px" width="26" height="26" viewBox="130 4 26 26"><g transform="translate(142.3 17.1) rotate(-45)" fill="none" stroke-linecap="round"><rect x="-10.8" y="-4" width="22.2" height="8" rx="4" stroke="#b0b0b0" stroke-width="2.8"/><rect x="-10.8" y="-4" width="22.2" height="8" rx="4" stroke="#f7f7f7" stroke-width="0.9"/><path d="M-5 -0.6 L7.6 -0.6 A1.9 1.9 0 0 1 7.6 3.2 L1 3.2" stroke="#b0b0b0" stroke-width="2.6"/><path d="M-5 -0.6 L7.6 -0.6 A1.9 1.9 0 0 1 7.6 3.2 L1 3.2" stroke="#f7f7f7" stroke-width="0.8"/></g><path d="M147.5 16.3 V27.3 M142 21.8 H153" stroke="#fff" stroke-width="4.6"/><path d="M147.5 16.8 V26.8 M142.5 21.8 H152.5" stroke="#36a91f" stroke-width="2.8"/></svg><div class="tx" style="left:174px;top:7px;color:#333">21.02.2022</div><div class="tx" style="left:307px;top:7px;color:#333">УПД</div><div class="tx" style="left:464px;top:7px;color:#333">№ 598 от 28.12.2016 на сумму 99 420</div><div class="tx" style="left:855px;top:7px;color:#333">Орлов Александ…</div><div class="tx" style="left:1012px;top:7px;color:#333">Торговы</div></div><div class="a" style="left:0;top:231px;width:1070px;height:33px;background:#fff;border-bottom:1px solid #e5e5e5"><svg class="a" style="left:8px;top:5px" width="24" height="24" viewBox="8 5 24 24"><g fill="none" stroke="#fec232" stroke-width="2.1" stroke-linecap="round" stroke-linejoin="round"><path d="M11.6 20.5 L16.5 8.1 L21.5 20.3"/><path d="M14 16.4 H19.6"/><path d="M17.9 22.2 L21.9 25.6 L28 19.2"/></g></svg><svg class="a" style="left:48px;top:4px" width="26" height="26" viewBox="48 4 26 26"><path d="M52.2 21.9 V25.8 H69.6 V21.9" fill="none" stroke="#cfcfcf" stroke-width="2"/><path d="M60.95 8.2 V17" stroke="#8a98f0" stroke-width="2.5" stroke-linecap="round"/><path d="M55.8 16.6 L66 16.6 L60.95 23.2 Z" fill="#6f80ee"/></svg><svg class="a" style="left:90px;top:6px" width="24" height="22" viewBox="90 6 24 22"><rect x="93.7" y="8.8" width="11.2" height="12.3" fill="#e3ebf2" stroke="#8aa4bb" stroke-width="1.3"/><path d="M95.3 11.2 H97.5 M95.3 13.7 H96.8 M95.3 16.2 H96.8 M95.3 18.5 H96.8" stroke="#9fb4c6" stroke-width="0.9"/><rect x="98.7" y="12.7" width="11.2" height="12.3" fill="#e3ebf2" stroke="#7f9bb3" stroke-width="1.4"/><rect x="99.9" y="13.9" width="8.8" height="9.9" fill="none" stroke="#fafcfd" stroke-width="0.8"/><path d="M100.8 15.2 H107.5 M100.8 17.5 H108 M100.8 20.3 H108 M100.8 22.5 H108" stroke="#7f9bb3" stroke-width="1"/></svg><div class="tx" style="left:174px;top:7px;color:#333">21.02.2022</div><div class="tx" style="left:307px;top:7px;color:#333">Счет-фактура</div><div class="tx" style="left:464px;top:7px;color:#333">№ 1 от 12.01.2021 на сумму 1 000</div><div class="tx" style="left:855px;top:7px;color:#333">Орлов Александ…</div><div class="tx" style="left:1012px;top:7px;color:#333">Андром</div></div><div class="a" style="left:0;top:264px;width:1070px;height:33px;background:#f9f9f9;border-bottom:1px solid #e5e5e5"><svg class="a" style="left:8px;top:5px" width="24" height="24" viewBox="8 5 24 24"><g fill="none" stroke="#fec232" stroke-width="2.1" stroke-linecap="round" stroke-linejoin="round"><path d="M11.6 20.5 L16.5 8.1 L21.5 20.3"/><path d="M14 16.4 H19.6"/><path d="M17.9 22.2 L21.9 25.6 L28 19.2"/></g></svg><svg class="a" style="left:48px;top:4px" width="26" height="26" viewBox="48 4 26 26"><path d="M52.2 21.9 V25.8 H69.6 V21.9" fill="none" stroke="#cfcfcf" stroke-width="2"/><path d="M60.95 8.2 V17" stroke="#8a98f0" stroke-width="2.5" stroke-linecap="round"/><path d="M55.8 16.6 L66 16.6 L60.95 23.2 Z" fill="#6f80ee"/></svg><div class="tx" style="left:174px;top:7px;color:#333">02.02.2022</div><div class="tx" style="left:307px;top:7px;color:#333">Счет-фактура</div><div class="tx" style="left:464px;top:7px;color:#333">№ 1396205 от 09.11.2021 на сумму 4 250</div><div class="tx" style="left:855px;top:7px;color:#333">Орлов Александ…</div></div><div class="a" style="left:0;top:297px;width:1070px;height:33px;background:#fff;border-bottom:1px solid #e5e5e5"><svg class="a" style="left:8px;top:5px" width="24" height="24" viewBox="8 5 24 24"><circle cx="19.65" cy="16.95" r="8.5" fill="none" stroke="#30b84a" stroke-width="2.1"/><path d="M15.8 17.5 L17.8 19.3 L22.5 15" fill="none" stroke="#30b84a" stroke-width="2.3" stroke-linecap="round" stroke-linejoin="round"/></svg><svg class="a" style="left:48px;top:4px" width="26" height="26" viewBox="48 4 26 26"><path d="M52.2 21.9 V25.8 H69.6 V21.9" fill="none" stroke="#cfcfcf" stroke-width="2"/><path d="M60.9 14 V22.3" stroke="#7dcc7d" stroke-width="2.8" stroke-linecap="round"/><path d="M56.1 14.4 L60.9 7.8 L65.8 14.4 Z" fill="#6cc56c"/></svg><svg class="a" style="left:90px;top:6px" width="24" height="22" viewBox="90 6 24 22"><rect x="93.7" y="8.8" width="11.2" height="12.3" fill="#e3ebf2" stroke="#8aa4bb" stroke-width="1.3"/><path d="M95.3 11.2 H97.5 M95.3 13.7 H96.8 M95.3 16.2 H96.8 M95.3 18.5 H96.8" stroke="#9fb4c6" stroke-width="0.9"/><rect x="98.7" y="12.7" width="11.2" height="12.3" fill="#e3ebf2" stroke="#7f9bb3" stroke-width="1.4"/><rect x="99.9" y="13.9" width="8.8" height="9.9" fill="none" stroke="#fafcfd" stroke-width="0.8"/><path d="M100.8 15.2 H107.5 M100.8 17.5 H108 M100.8 20.3 H108 M100.8 22.5 H108" stroke="#7f9bb3" stroke-width="1"/></svg><svg class="a" style="left:132px;top:5px" width="22" height="24" viewBox="132 5 22 24"><path d="M135.6 8.3 H145.5 L149.6 12.4 V25.1 H135.6 Z" fill="#e2eaf2" stroke="#8ea7bd" stroke-width="1.4" stroke-linejoin="round"/><path d="M145.2 8.5 V12.7 H149.4" fill="#f4f7fa" stroke="#8ea7bd" stroke-width="1"/><path d="M137.5 19 H147.5 M137.5 21.3 H147.5 M137.5 23.3 H147.5" stroke="#a9bdd0" stroke-width="0.9"/><path d="M139 17.5 V9.5 A2 2 0 0 1 143 9.5 V17 A1.2 1.2 0 0 1 140.6 17 V10.5" fill="none" stroke="#7a7a7a" stroke-width="1.3"/></svg><div class="tx" style="left:174px;top:7px;color:#333">02.02.2022</div><div class="tx" style="left:307px;top:7px;color:#333">УПД</div><div class="tx" style="left:464px;top:7px;color:#333">Документ № 589 от 22.12.2016 на сумму 10 220</div><div class="tx" style="left:855px;top:7px;color:#333">Орлов Александ…</div><div class="tx" style="left:1012px;top:7px;color:#333">Торговы</div></div><div class="a" style="left:0;top:330px;width:1070px;height:33px;background:#f9f9f9;border-bottom:1px solid #e5e5e5"><svg class="a" style="left:8px;top:5px" width="24" height="24" viewBox="8 5 24 24"><g fill="none" stroke="#fec232" stroke-width="2.1" stroke-linecap="round" stroke-linejoin="round"><path d="M11.6 20.5 L16.5 8.1 L21.5 20.3"/><path d="M14 16.4 H19.6"/><path d="M17.9 22.2 L21.9 25.6 L28 19.2"/></g></svg><svg class="a" style="left:48px;top:4px" width="26" height="26" viewBox="48 4 26 26"><path d="M52.2 21.9 V25.8 H69.6 V21.9" fill="none" stroke="#cfcfcf" stroke-width="2"/><path d="M60.9 14 V22.3" stroke="#7dcc7d" stroke-width="2.8" stroke-linecap="round"/><path d="M56.1 14.4 L60.9 7.8 L65.8 14.4 Z" fill="#6cc56c"/></svg><svg class="a" style="left:90px;top:6px" width="24" height="22" viewBox="90 6 24 22"><rect x="93.7" y="8.8" width="11.2" height="12.3" fill="#e3ebf2" stroke="#8aa4bb" stroke-width="1.3"/><path d="M95.3 11.2 H97.5 M95.3 13.7 H96.8 M95.3 16.2 H96.8 M95.3 18.5 H96.8" stroke="#9fb4c6" stroke-width="0.9"/><rect x="98.7" y="12.7" width="11.2" height="12.3" fill="#e3ebf2" stroke="#7f9bb3" stroke-width="1.4"/><rect x="99.9" y="13.9" width="8.8" height="9.9" fill="none" stroke="#fafcfd" stroke-width="0.8"/><path d="M100.8 15.2 H107.5 M100.8 17.5 H108 M100.8 20.3 H108 M100.8 22.5 H108" stroke="#7f9bb3" stroke-width="1"/></svg><svg class="a" style="left:130px;top:4px" width="26" height="26" viewBox="130 4 26 26"><g transform="translate(142.3 17.1) rotate(-45)" fill="none" stroke-linecap="round"><rect x="-10.8" y="-4" width="22.2" height="8" rx="4" stroke="#b0b0b0" stroke-width="2.8"/><rect x="-10.8" y="-4" width="22.2" height="8" rx="4" stroke="#f7f7f7" stroke-width="0.9"/><path d="M-5 -0.6 L7.6 -0.6 A1.9 1.9 0 0 1 7.6 3.2 L1 3.2" stroke="#b0b0b0" stroke-width="2.6"/><path d="M-5 -0.6 L7.6 -0.6 A1.9 1.9 0 0 1 7.6 3.2 L1 3.2" stroke="#f7f7f7" stroke-width="0.8"/></g><path d="M147.5 16.3 V27.3 M142 21.8 H153" stroke="#fff" stroke-width="4.6"/><path d="M147.5 16.8 V26.8 M142.5 21.8 H152.5" stroke="#36a91f" stroke-width="2.8"/></svg><div class="tx" style="left:174px;top:7px;color:#333">02.02.2022</div><div class="tx" style="left:307px;top:7px;color:#333">УПД</div><div class="tx" style="left:464px;top:7px;color:#333">№ 589 от 22.12.2016 на сумму 10 220</div><div class="tx" style="left:855px;top:7px;color:#333">Орлов Александ…</div><div class="tx" style="left:1012px;top:7px;color:#333">Торговы</div></div><div class="a" style="left:0;top:363px;width:1070px;height:33px;background:#fff;border-bottom:1px solid #e5e5e5"><svg class="a" style="left:8px;top:5px" width="24" height="24" viewBox="8 5 24 24"><circle cx="19.65" cy="16.95" r="8.5" fill="none" stroke="#30b84a" stroke-width="2.1"/><path d="M15.8 17.5 L17.8 19.3 L22.5 15" fill="none" stroke="#30b84a" stroke-width="2.3" stroke-linecap="round" stroke-linejoin="round"/></svg><svg class="a" style="left:48px;top:4px" width="26" height="26" viewBox="48 4 26 26"><path d="M52.2 21.9 V25.8 H69.6 V21.9" fill="none" stroke="#cfcfcf" stroke-width="2"/><path d="M60.9 14 V22.3" stroke="#7dcc7d" stroke-width="2.8" stroke-linecap="round"/><path d="M56.1 14.4 L60.9 7.8 L65.8 14.4 Z" fill="#6cc56c"/></svg><svg class="a" style="left:132px;top:5px" width="22" height="24" viewBox="132 5 22 24"><path d="M135.6 8.3 H145.5 L149.6 12.4 V25.1 H135.6 Z" fill="#e2eaf2" stroke="#8ea7bd" stroke-width="1.4" stroke-linejoin="round"/><path d="M145.2 8.5 V12.7 H149.4" fill="#f4f7fa" stroke="#8ea7bd" stroke-width="1"/><path d="M137.5 19 H147.5 M137.5 21.3 H147.5 M137.5 23.3 H147.5" stroke="#a9bdd0" stroke-width="0.9"/><path d="M139 17.5 V9.5 A2 2 0 0 1 143 9.5 V17 A1.2 1.2 0 0 1 140.6 17 V10.5" fill="none" stroke="#7a7a7a" stroke-width="1.3"/></svg><div class="tx" style="left:174px;top:7px;color:#333">02.02.2022</div><div class="tx" style="left:307px;top:7px;color:#333">УПД</div><div class="tx" style="left:464px;top:7px;color:#333">№ 5899 от 22.12.2016 на сумму 10 220</div><div class="tx" style="left:855px;top:7px;color:#333">Орлов Александ…</div><div class="tx" style="left:1012px;top:7px;color:#333">Торговы</div></div><div class="a" style="left:0;top:396px;width:1070px;height:33px;background:#f9f9f9;border-bottom:1px solid #e5e5e5"><svg class="a" style="left:8px;top:5px" width="24" height="24" viewBox="8 5 24 24"><circle cx="19.65" cy="16.95" r="8.5" fill="none" stroke="#30b84a" stroke-width="2.1"/><path d="M15.8 17.5 L17.8 19.3 L22.5 15" fill="none" stroke="#30b84a" stroke-width="2.3" stroke-linecap="round" stroke-linejoin="round"/></svg><svg class="a" style="left:48px;top:4px" width="26" height="26" viewBox="48 4 26 26"><path d="M52.2 21.9 V25.8 H69.6 V21.9" fill="none" stroke="#cfcfcf" stroke-width="2"/><path d="M60.9 14 V22.3" stroke="#7dcc7d" stroke-width="2.8" stroke-linecap="round"/><path d="M56.1 14.4 L60.9 7.8 L65.8 14.4 Z" fill="#6cc56c"/></svg><svg class="a" style="left:90px;top:6px" width="24" height="22" viewBox="90 6 24 22"><rect x="93.7" y="8.8" width="11.2" height="12.3" fill="#e3ebf2" stroke="#8aa4bb" stroke-width="1.3"/><path d="M95.3 11.2 H97.5 M95.3 13.7 H96.8 M95.3 16.2 H96.8 M95.3 18.5 H96.8" stroke="#9fb4c6" stroke-width="0.9"/><rect x="98.7" y="12.7" width="11.2" height="12.3" fill="#e3ebf2" stroke="#7f9bb3" stroke-width="1.4"/><rect x="99.9" y="13.9" width="8.8" height="9.9" fill="none" stroke="#fafcfd" stroke-width="0.8"/><path d="M100.8 15.2 H107.5 M100.8 17.5 H108 M100.8 20.3 H108 M100.8 22.5 H108" stroke="#7f9bb3" stroke-width="1"/></svg><svg class="a" style="left:130px;top:4px" width="26" height="26" viewBox="130 4 26 26"><g transform="translate(142.3 17.1) rotate(-45)" fill="none" stroke-linecap="round"><rect x="-10.8" y="-4" width="22.2" height="8" rx="4" stroke="#b0b0b0" stroke-width="2.8"/><rect x="-10.8" y="-4" width="22.2" height="8" rx="4" stroke="#f7f7f7" stroke-width="0.9"/><path d="M-5 -0.6 L7.6 -0.6 A1.9 1.9 0 0 1 7.6 3.2 L1 3.2" stroke="#b0b0b0" stroke-width="2.6"/><path d="M-5 -0.6 L7.6 -0.6 A1.9 1.9 0 0 1 7.6 3.2 L1 3.2" stroke="#f7f7f7" stroke-width="0.8"/></g><path d="M147.5 16.3 V27.3 M142 21.8 H153" stroke="#fff" stroke-width="4.6"/><path d="M147.5 16.8 V26.8 M142.5 21.8 H152.5" stroke="#36a91f" stroke-width="2.8"/></svg><div class="tx" style="left:174px;top:7px;color:#333">25.01.2022</div><div class="tx" style="left:307px;top:7px;color:#333">ТОРГ-12</div><div class="tx" style="left:464px;top:7px;color:#333">Документ № 54 от 18.05.2017 на сумму 12 278,75</div><div class="tx" style="left:855px;top:7px;color:#333">Орлов Александ…</div><div class="tx" style="left:1012px;top:7px;color:#333">Торговы</div></div><div class="a" style="left:0;top:429px;width:1070px;height:33px;background:#fff;border-bottom:1px solid #e5e5e5"><svg class="a" style="left:8px;top:5px" width="24" height="24" viewBox="8 5 24 24"><g fill="none" stroke="#fec232" stroke-width="2.1" stroke-linecap="round" stroke-linejoin="round"><path d="M11.6 20.5 L16.5 8.1 L21.5 20.3"/><path d="M14 16.4 H19.6"/><path d="M17.9 22.2 L21.9 25.6 L28 19.2"/></g></svg><svg class="a" style="left:48px;top:4px" width="26" height="26" viewBox="48 4 26 26"><path d="M52.2 21.9 V25.8 H69.6 V21.9" fill="none" stroke="#cfcfcf" stroke-width="2"/><path d="M60.9 14 V22.3" stroke="#7dcc7d" stroke-width="2.8" stroke-linecap="round"/><path d="M56.1 14.4 L60.9 7.8 L65.8 14.4 Z" fill="#6cc56c"/></svg><svg class="a" style="left:90px;top:6px" width="24" height="22" viewBox="90 6 24 22"><rect x="93.7" y="8.8" width="11.2" height="12.3" fill="#e3ebf2" stroke="#8aa4bb" stroke-width="1.3"/><path d="M95.3 11.2 H97.5 M95.3 13.7 H96.8 M95.3 16.2 H96.8 M95.3 18.5 H96.8" stroke="#9fb4c6" stroke-width="0.9"/><rect x="98.7" y="12.7" width="11.2" height="12.3" fill="#e3ebf2" stroke="#7f9bb3" stroke-width="1.4"/><rect x="99.9" y="13.9" width="8.8" height="9.9" fill="none" stroke="#fafcfd" stroke-width="0.8"/><path d="M100.8 15.2 H107.5 M100.8 17.5 H108 M100.8 20.3 H108 M100.8 22.5 H108" stroke="#7f9bb3" stroke-width="1"/></svg><svg class="a" style="left:130px;top:4px" width="26" height="26" viewBox="130 4 26 26"><g transform="translate(142.3 17.1) rotate(-45)" fill="none" stroke-linecap="round"><rect x="-10.8" y="-4" width="22.2" height="8" rx="4" stroke="#b0b0b0" stroke-width="2.8"/><rect x="-10.8" y="-4" width="22.2" height="8" rx="4" stroke="#f7f7f7" stroke-width="0.9"/><path d="M-5 -0.6 L7.6 -0.6 A1.9 1.9 0 0 1 7.6 3.2 L1 3.2" stroke="#b0b0b0" stroke-width="2.6"/><path d="M-5 -0.6 L7.6 -0.6 A1.9 1.9 0 0 1 7.6 3.2 L1 3.2" stroke="#f7f7f7" stroke-width="0.8"/></g><path d="M147.5 16.3 V27.3 M142 21.8 H153" stroke="#fff" stroke-width="4.6"/><path d="M147.5 16.8 V26.8 M142.5 21.8 H152.5" stroke="#36a91f" stroke-width="2.8"/></svg><div class="tx" style="left:174px;top:7px;color:#333">25.01.2022</div><div class="tx" style="left:307px;top:7px;color:#333">Счет-фактура</div><div class="tx" style="left:464px;top:7px;color:#333">№ 3 от 10.04.2017 на сумму 36 504</div><div class="tx" style="left:855px;top:7px;color:#333">Орлов Александ…</div><div class="tx" style="left:1012px;top:7px;color:#333">Торговы</div></div><div class="a" style="left:0;top:462px;width:1070px;height:33px;background:#f9f9f9;border-bottom:1px solid #e5e5e5"><svg class="a" style="left:8px;top:5px" width="24" height="24" viewBox="8 5 24 24"><circle cx="19.65" cy="16.95" r="8.5" fill="none" stroke="#30b84a" stroke-width="2.1"/><path d="M15.8 17.5 L17.8 19.3 L22.5 15" fill="none" stroke="#30b84a" stroke-width="2.3" stroke-linecap="round" stroke-linejoin="round"/></svg><svg class="a" style="left:48px;top:4px" width="26" height="26" viewBox="48 4 26 26"><path d="M52.2 21.9 V25.8 H69.6 V21.9" fill="none" stroke="#cfcfcf" stroke-width="2"/><path d="M60.9 14 V22.3" stroke="#7dcc7d" stroke-width="2.8" stroke-linecap="round"/><path d="M56.1 14.4 L60.9 7.8 L65.8 14.4 Z" fill="#6cc56c"/></svg><svg class="a" style="left:132px;top:5px" width="22" height="24" viewBox="132 5 22 24"><path d="M135.6 8.3 H145.5 L149.6 12.4 V25.1 H135.6 Z" fill="#e2eaf2" stroke="#8ea7bd" stroke-width="1.4" stroke-linejoin="round"/><path d="M145.2 8.5 V12.7 H149.4" fill="#f4f7fa" stroke="#8ea7bd" stroke-width="1"/><path d="M137.5 19 H147.5 M137.5 21.3 H147.5 M137.5 23.3 H147.5" stroke="#a9bdd0" stroke-width="0.9"/><path d="M139 17.5 V9.5 A2 2 0 0 1 143 9.5 V17 A1.2 1.2 0 0 1 140.6 17 V10.5" fill="none" stroke="#7a7a7a" stroke-width="1.3"/></svg><div class="tx" style="left:174px;top:7px;color:#333">25.01.2022</div><div class="tx" style="left:307px;top:7px;color:#333">УПД</div><div class="tx" style="left:464px;top:7px;color:#333">№ 1111 от 28.12.2016 на сумму 99 420</div><div class="tx" style="left:855px;top:7px;color:#333">Орлов Александ…</div><div class="tx" style="left:1012px;top:7px;color:#333">Торговы</div></div><div class="a" style="left:0;top:495px;width:1070px;height:33px;background:#fff;border-bottom:1px solid #e5e5e5"><svg class="a" style="left:8px;top:5px" width="24" height="24" viewBox="8 5 24 24"><g fill="none" stroke="#fec232" stroke-width="2.1" stroke-linecap="round" stroke-linejoin="round"><path d="M11.6 20.5 L16.5 8.1 L21.5 20.3"/><path d="M14 16.4 H19.6"/><path d="M17.9 22.2 L21.9 25.6 L28 19.2"/></g></svg><svg class="a" style="left:48px;top:4px" width="26" height="26" viewBox="48 4 26 26"><path d="M52.2 21.9 V25.8 H69.6 V21.9" fill="none" stroke="#cfcfcf" stroke-width="2"/><path d="M60.95 8.2 V17" stroke="#8a98f0" stroke-width="2.5" stroke-linecap="round"/><path d="M55.8 16.6 L66 16.6 L60.95 23.2 Z" fill="#6f80ee"/></svg><div class="tx" style="left:174px;top:7px;color:#333">15.12.2021</div><div class="tx" style="left:307px;top:7px;color:#333">Счет-фактура</div><div class="tx" style="left:464px;top:7px;color:#333">№ К/4969354 от 31.10.2021 на сумму 13 448,38</div><div class="tx" style="left:855px;top:7px;color:#333">Орлов Александ…</div></div><div class="a" style="left:0;top:528px;width:1070px;height:33px;background:#f9f9f9;border-bottom:1px solid #e5e5e5"><svg class="a" style="left:8px;top:5px" width="24" height="24" viewBox="8 5 24 24"><g fill="none" stroke="#fec232" stroke-width="2.1" stroke-linecap="round" stroke-linejoin="round"><path d="M11.6 20.5 L16.5 8.1 L21.5 20.3"/><path d="M14 16.4 H19.6"/><path d="M17.9 22.2 L21.9 25.6 L28 19.2"/></g></svg><svg class="a" style="left:48px;top:4px" width="26" height="26" viewBox="48 4 26 26"><path d="M52.2 21.9 V25.8 H69.6 V21.9" fill="none" stroke="#cfcfcf" stroke-width="2"/><path d="M60.95 8.2 V17" stroke="#8a98f0" stroke-width="2.5" stroke-linecap="round"/><path d="M55.8 16.6 L66 16.6 L60.95 23.2 Z" fill="#6f80ee"/></svg><div class="tx" style="left:174px;top:7px;color:#333">15.12.2021</div><div class="tx" style="left:307px;top:7px;color:#333">УПД</div><div class="tx" style="left:464px;top:7px;color:#333">№ МВП0826000595/45 от 26.08.2021 на сумму 1…</div><div class="tx" style="left:855px;top:7px;color:#333">Орлов Александ…</div></div><div class="a" style="left:0;top:561px;width:1070px;height:33px;background:#fff;border-bottom:1px solid #e5e5e5"><svg class="a" style="left:8px;top:5px" width="24" height="24" viewBox="8 5 24 24"><g fill="none" stroke="#fec232" stroke-width="2.1" stroke-linecap="round" stroke-linejoin="round"><path d="M11.6 20.5 L16.5 8.1 L21.5 20.3"/><path d="M14 16.4 H19.6"/><path d="M17.9 22.2 L21.9 25.6 L28 19.2"/></g></svg><svg class="a" style="left:48px;top:4px" width="26" height="26" viewBox="48 4 26 26"><path d="M52.2 21.9 V25.8 H69.6 V21.9" fill="none" stroke="#cfcfcf" stroke-width="2"/><path d="M60.95 8.2 V17" stroke="#8a98f0" stroke-width="2.5" stroke-linecap="round"/><path d="M55.8 16.6 L66 16.6 L60.95 23.2 Z" fill="#6f80ee"/></svg><div class="tx" style="left:174px;top:7px;color:#333">15.12.2021</div><div class="tx" style="left:307px;top:7px;color:#333">Акт об оказании …</div><div class="tx" style="left:464px;top:7px;color:#333">№ 663 от 09.07.2021 на сумму 13 448,38</div><div class="tx" style="left:855px;top:7px;color:#333">Орлов Александ…</div></div><div class="a" style="left:0;top:594px;width:1070px;height:33px;background:#f9f9f9;border-bottom:1px solid #e5e5e5"><svg class="a" style="left:8px;top:5px" width="24" height="24" viewBox="8 5 24 24"><g fill="none" stroke="#fec232" stroke-width="2.1" stroke-linecap="round" stroke-linejoin="round"><path d="M11.6 20.5 L16.5 8.1 L21.5 20.3"/><path d="M14 16.4 H19.6"/><path d="M17.9 22.2 L21.9 25.6 L28 19.2"/></g></svg><svg class="a" style="left:48px;top:4px" width="26" height="26" viewBox="48 4 26 26"><path d="M52.2 21.9 V25.8 H69.6 V21.9" fill="none" stroke="#cfcfcf" stroke-width="2"/><path d="M60.95 8.2 V17" stroke="#8a98f0" stroke-width="2.5" stroke-linecap="round"/><path d="M55.8 16.6 L66 16.6 L60.95 23.2 Z" fill="#6f80ee"/></svg><div class="tx" style="left:174px;top:7px;color:#333">15.12.2021</div><div class="tx" style="left:307px;top:7px;color:#333">УПД</div><div class="tx" style="left:464px;top:7px;color:#333">№ 1100 от 01.10.2021 на сумму 45 300</div><div class="tx" style="left:855px;top:7px;color:#333">Орлов А</div></div></div><div class="a" style="left:0;top:642px;width:1070px;height:26px;background:#fff"></div><svg class="a" style="left:10px;top:651px" width="6" height="8" viewBox="0 0 6 8"><path d="M5 0.5 V7.5 L1 4 Z" fill="#bbb"/></svg><div class="a" style="left:27px;top:649px;width:876px;height:11px;border-radius:6px;background:#d3d3d3"></div><div class="a" style="left:27px;top:649px;width:595px;height:11px;border-radius:6px;background:#9b9b9b"></div><svg class="a" style="left:914px;top:651px" width="6" height="8" viewBox="0 0 6 8"><path d="M1 0.5 V7.5 L5 4 Z" fill="#333"/></svg><div class="a" style="left:950px;top:642px;width:121px;height:27px;border:1px solid #a9a9a9;border-right:none;border-bottom:none;background:#fff"></div><div class="a" style="left:1011px;top:643px;width:59px;height:25px;background:linear-gradient(#fff 30%,#efefef)"></div><div class="a" style="left:980px;top:643px;width:1px;height:26px;background:#a9a9a9"></div><div class="a" style="left:1010px;top:643px;width:1px;height:26px;background:#a9a9a9"></div><div class="a" style="left:1040px;top:643px;width:1px;height:26px;background:#a9a9a9"></div><svg class="a" style="left:950px;top:642px" width="120" height="26" viewBox="1375 781 120 26"><path d="M1384.3 792 H1397.5" stroke="#a8a8a8" stroke-width="1.4"/><path d="M1384.3 798.6 L1397.5 798.6 L1390.9 793.3 Z" fill="#a8a8a8"/><path d="M1414.3 798.4 L1427.5 798.4 L1420.9 792 Z" fill="#a8a8a8"/><path d="M1443.8 791.6 L1457.4 791.6 L1450.6 798.6 Z" fill="#333"/><path d="M1473.8 791.6 L1486.8 791.6 L1480.3 797.8 Z" fill="#333"/><path d="M1474 799.2 H1486.7" stroke="#333" stroke-width="1.4"/></svg></div></body></html>
